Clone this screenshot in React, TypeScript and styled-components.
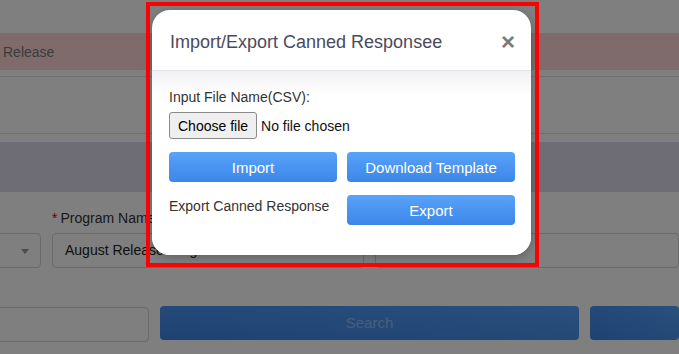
import React from 'react';
import styled, { createGlobalStyle } from 'styled-components';

const GlobalStyle = createGlobalStyle`
  html, body {
    margin: 0;
    padding: 0;
  }

  body {
    width: 679px;
    height: 354px;
    overflow: hidden;
    font-family: 'Liberation Sans', Arial, Helvetica, sans-serif;
    background: #fff;
  }
`;

const Page = styled.div`
  position: relative;
  display: flex;
  flex-direction: column;
  width: 679px;
  height: 354px;
  overflow: hidden;
  background: #fff;
`;

const TopStrip = styled.div`
  height: 33px;
  flex-shrink: 0;
`;

const AlertBar = styled.div`
  height: 37px;
  flex-shrink: 0;
  padding-left: 3px;
  background: #fed7d7;
  color: #777;
  font-size: 14px;
  line-height: 38px;
`;

const Section = styled.div`
  height: 56px;
  flex-shrink: 0;
  margin-top: 6px;
  border-top: 1px solid #e0e0e0;
  border-bottom: 1px solid #e0e0e0;
`;

const TitleBand = styled.div`
  height: 50px;
  flex-shrink: 0;
  margin-top: 8px;
  background: #ddd8e8;
`;

const Form = styled.div`
  display: flex;
  flex-direction: column;
  padding-top: 18px;
  margin-left: -100px;
`;

const FieldGrid = styled.div<{ $columns: string }>`
  display: grid;
  grid-template-columns: ${p => p.$columns};
  column-gap: 11px;
`;

const Label = styled.div`
  font-size: 14px;
  line-height: 16px;
  color: #333;
`;

const Required = styled.span`
  color: #c00;
  margin-right: 3px;
`;

const FieldRow = styled(FieldGrid)`
  margin-top: 7px;
`;

const Field = styled.div`
  position: relative;
  height: 35px;
  box-sizing: border-box;
  border: 1px solid #d4d4d4;
  border-radius: 4px;
  padding: 0 12px;
  font-size: 14px;
  line-height: 33px;
  color: #222;
`;

const SelectArrow = styled.span`
  position: absolute;
  right: 11px;
  top: 15px;
  width: 0;
  height: 0;
  border-left: 4px solid transparent;
  border-right: 4px solid transparent;
  border-top: 5px solid #999;
`;

const SearchRow = styled(FieldGrid)`
  margin-top: 38px;
  align-items: start;
`;

const SearchInput = styled(Field)`
  margin-top: 1px;
`;

const PageButton = styled.div`
  height: 34px;
  border-radius: 4px;
  background: linear-gradient(to top right, #3e84e6, #56a0f8);
  color: rgba(255, 255, 255, 0.4);
  font-size: 15px;
  line-height: 34px;
  text-align: center;
`;

const Overlay = styled.div`
  position: absolute;
  inset: 0;
  background: rgba(0, 0, 0, 0.5);
`;

const Modal = styled.div`
  position: absolute;
  top: 10px;
  left: 152px;
  width: 379px;
  background: #fff;
  border-radius: 18px;
  box-shadow: 0 2px 8px rgba(0, 0, 0, 0.25);
  overflow: hidden;
`;

const ModalHeader = styled.div`
  display: flex;
  align-items: center;
  justify-content: space-between;
  box-sizing: border-box;
  height: 61px;
  padding: 4px 16px 0 18px;
  border-bottom: 1px solid #e3e3e8;
`;

const ModalTitle = styled.div`
  font-size: 18px;
  color: #4a4a5c;
`;

const CloseButton = styled.button`
  border: 0;
  background: none;
  padding: 0;
  font-family: inherit;
  font-size: 24px;
  font-weight: bold;
  line-height: 1;
  color: #7a7a7a;
  cursor: pointer;
`;

const ModalBody = styled.div`
  display: flex;
  flex-direction: column;
  padding: 16px 16px 30px 17px;
  background: linear-gradient(to bottom, #f1f1f4 0px, #fff 24px);
`;

const BodyText = styled.div`
  font-size: 14px;
  line-height: 20px;
  color: #333;
`;

const FilePicker = styled.label`
  display: flex;
  align-items: center;
  gap: 4px;
  margin-top: 5px;
  font-size: 14px;
  color: #111;
`;

const HiddenInput = styled.input`
  display: none;
`;

const ChooseButton = styled.span`
  height: 27px;
  box-sizing: border-box;
  padding: 0 8px;
  border: 1px solid #8a8a8a;
  border-radius: 3px;
  background: #efefef;
  line-height: 26px;
  color: #000;
`;

const ActionGrid = styled.div`
  display: grid;
  grid-template-columns: 1fr 1fr;
  column-gap: 10px;
  row-gap: 13px;
  align-items: start;
  margin-top: 13px;
`;

const ActionButton = styled.button`
  height: 30px;
  border: 0;
  border-radius: 4px;
  background: linear-gradient(to bottom, #58a3fa, #3c86e8);
  color: #fff;
  font-family: inherit;
  font-size: 15px;
  cursor: pointer;
`;

const ExportLabel = styled(BodyText)`
  padding-top: 1px;
`;

const Annotation = styled.div`
  position: absolute;
  top: 2px;
  left: 146px;
  width: 393px;
  height: 265px;
  box-sizing: border-box;
  border: 4px solid #f00;
  pointer-events: none;
`;

export default function App() {
  return (
    <>
      <GlobalStyle />
      <Page>
        <TopStrip />
        <AlertBar>Release</AlertBar>
        <Section />
        <TitleBand />
        <Form>
          <FieldGrid $columns="141px 312px 1fr">
            <span />
            <Label>
              <Required>*</Required>Program Name
            </Label>
            <Label>Admin</Label>
          </FieldGrid>
          <FieldRow $columns="141px 312px 1fr">
            <Field>
              <SelectArrow />
            </Field>
            <Field>August Release Program</Field>
            <Field>InteractAdmin</Field>
          </FieldRow>
          <SearchRow $columns="249px 419px 1fr">
            <SearchInput />
            <PageButton>Search</PageButton>
            <PageButton />
          </SearchRow>
        </Form>

        <Overlay />
        <Modal>
          <ModalHeader>
            <ModalTitle>Import/Export Canned Responsee</ModalTitle>
            <CloseButton aria-label="Close">×</CloseButton>
          </ModalHeader>
          <ModalBody>
            <BodyText>Input File Name(CSV):</BodyText>
            <FilePicker>
              <HiddenInput type="file" accept=".csv" />
              <ChooseButton>Choose file</ChooseButton>
              <span>No file chosen</span>
            </FilePicker>
            <ActionGrid>
              <ActionButton>Import</ActionButton>
              <ActionButton>Download Template</ActionButton>
              <ExportLabel>Export Canned Response</ExportLabel>
              <ActionButton>Export</ActionButton>
            </ActionGrid>
          </ModalBody>
        </Modal>
        <Annotation />
      </Page>
    </>
  );
}
